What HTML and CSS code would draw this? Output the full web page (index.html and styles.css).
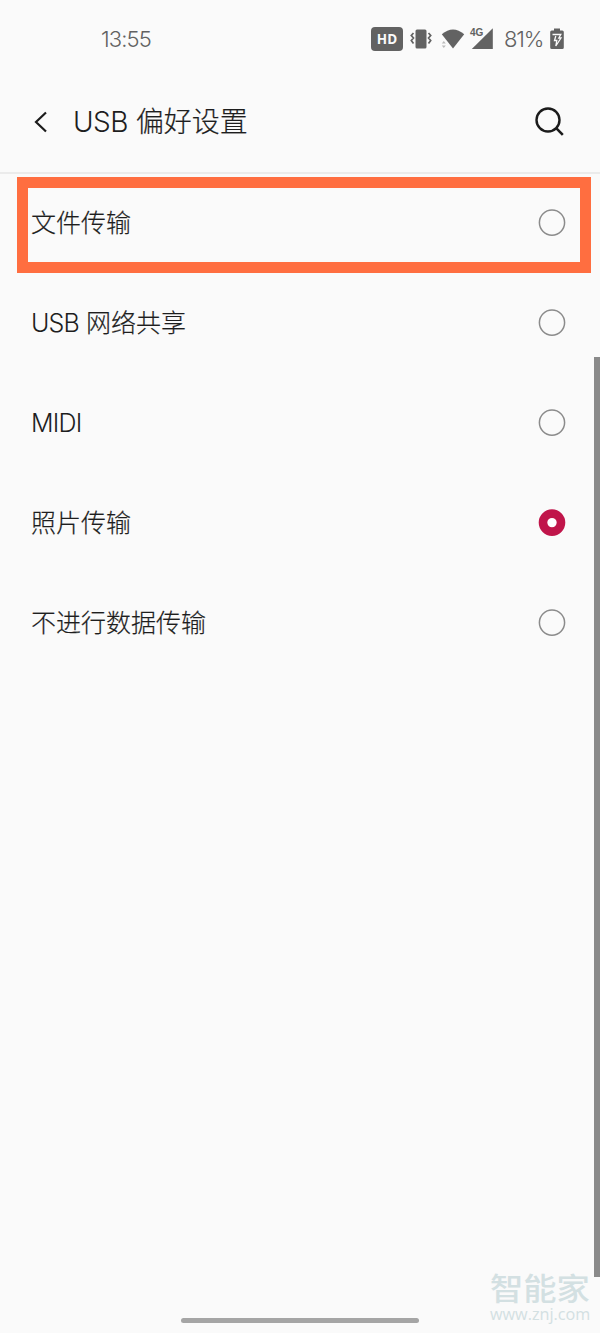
FILE: index.html
```html
<!DOCTYPE html>
<html lang="zh-CN">
<head>
<meta charset="utf-8">
<title>USB 偏好设置</title>
<link rel="stylesheet" href="styles.css">
</head>
<body>
<div class="screen">
  <div class="status">
    <span class="time">13:55</span>
    <div class="status-icons">
      <span class="hd">HD</span>
      <svg class="vibrate" width="22" height="22" viewBox="0 0 22 22"><rect x="5.5" y="1.5" width="11" height="19" rx="1.5" fill="#626262"/><path d="M3.5 5 L1.3 7.5 L3.5 10 L1.3 12.5 L3.5 15.5 M18.5 5 L20.7 7.5 L18.5 10 L20.7 12.5 L18.5 15.5" fill="none" stroke="#626262" stroke-width="1.7"/></svg>
      <svg class="wifi" width="24" height="22" viewBox="0 0 24 22"><path d="M.8 6.2 Q12-3.2 23.2 6.2 L12 20.5Z" fill="#626262"/><path d="M.8 15.5 L2.8 13 L4.8 15.5Z M.8 17.5 L2.8 20 L4.8 17.5Z" fill="#bbb"/></svg>
      <div class="signal"><span class="net">4G</span><svg width="22" height="22" viewBox="0 0 22 22"><path d="M21.8 .2 V21 H.8Z" fill="#626262"/></svg></div>
      <span class="percent">81%</span>
      <svg class="battery" width="14" height="22" viewBox="0 0 14 22"><path d="M4 .5 H10 V2.5 H12.3 Q13.8 2.5 13.8 4 V19.5 Q13.8 21 12.3 21 H1.7 Q.2 21 .2 19.5 V4 Q.2 2.5 1.7 2.5 H4Z" fill="#626262"/><path d="M2.5 6.5 H10.8 L8.8 10 H11 L5.8 18 L6.8 12.5 H4.5 L5.8 8" fill="none" stroke="#fafafa" stroke-width="1.3"/></svg>
    </div>
  </div>
  <header class="header">
    <svg class="back" width="14" height="22" viewBox="0 0 14 22"><path d="M12 1.5 L2 11 L12 20.5" fill="none" stroke="#1b1b1b" stroke-width="2.2"/></svg>
    <h1 class="title"><span class="latin">USB</span> 偏好设置</h1>
    <svg class="search" width="30" height="30" viewBox="0 0 30 30"><circle cx="13" cy="13" r="11.5" fill="none" stroke="#1b1b1b" stroke-width="2.4"/><path d="M21.2 21.2 L27.8 27.8" stroke="#1b1b1b" stroke-width="2.6"/></svg>
  </header>
  <main class="list">
    <div class="row"><span class="label">文件传输</span><svg class="radio" viewBox="0 0 28 28"><circle cx="14" cy="13.6" r="12.6"/></svg></div>
    <div class="row"><span class="label"><span class="latin">USB</span> 网络共享</span><svg class="radio" viewBox="0 0 28 28"><circle cx="14" cy="13.6" r="12.6"/></svg></div>
    <div class="row"><span class="label"><span class="latin">MIDI</span></span><svg class="radio" viewBox="0 0 28 28"><circle cx="14" cy="13.6" r="12.6"/></svg></div>
    <div class="row"><span class="label">照片传输</span><svg class="radio checked" viewBox="0 0 28 28"><circle cx="14" cy="13.6" r="9"/></svg></div>
    <div class="row"><span class="label">不进行数据传输</span><svg class="radio" viewBox="0 0 28 28"><circle cx="14" cy="13.6" r="12.6"/></svg></div>
    <div class="highlight"></div>
  </main>
  <div class="scrollbar"></div>
  <div class="watermark"><span class="brand">智能家</span><span class="site">www.znj.com</span></div>
  <div class="gesture"></div>
</div>
</body>
</html>
```
FILE: styles.css
```css
* { box-sizing: border-box; }
body { margin: 0; background: #fafafa; }
.screen {
  position: relative;
  display: flex;
  flex-direction: column;
  width: 600px;
  height: 1333px;
  overflow: hidden;
  background: #fafafa;
  color: #1e1e1e;
  font-family: Inter, "Noto Sans CJK SC", sans-serif;
  font-weight: 300;
}
.status {
  display: flex;
  align-items: center;
  justify-content: space-between;
  height: 78px;
  padding: 0 36px 0 101px;
  color: #626262;
}
.time { font-size: 22px; letter-spacing: -0.9px; }
.status-icons { display: flex; align-items: center; }
.hd {
  width: 32px;
  height: 24px;
  margin-right: 7px;
  border-radius: 4px;
  background: #626262;
  color: #fafafa;
  font: 700 13.5px/24px "Open Sans", sans-serif;
  text-align: center;
}
.wifi { margin-left: 9px; }
.signal { position: relative; height: 22px; margin-left: 6px; }
.signal svg { display: block; }
.net {
  position: absolute;
  left: -1px;
  top: -1px;
  font: 700 10px/11px "Liberation Sans", sans-serif;
}
.percent { width: 39px; margin: 0 7px 0 11px; font-size: 22px; letter-spacing: -1.2px; white-space: nowrap; }
.header {
  display: flex;
  align-items: center;
  height: 96px;
  padding: 0 35px 6px 34px;
  border-bottom: 2px solid #ebebeb;
}
.title { flex: 1; margin: 0 0 0 25px; font-size: 28px; font-weight: 300; line-height: 40px; white-space: nowrap; -webkit-text-stroke: 0.2px #1e1e1e; }
.latin { letter-spacing: -0.5px; -webkit-text-stroke: 0; }
.list { position: relative; display: flex; flex-direction: column; margin-top: -1px; }
.row {
  display: flex;
  align-items: center;
  justify-content: space-between;
  height: 100px;
  padding: 0 34px 1px 31px;
}
.label { font-size: 25px; line-height: 36px; -webkit-text-stroke: 0.2px #1e1e1e; }
.label .latin { letter-spacing: -0.8px; }
.radio { width: 28px; height: 28px; fill: none; stroke: #8b8b8b; stroke-width: 1.5px; }
.radio.checked { fill: #fff; stroke: #c0154a; stroke-width: 8.6px; }
.highlight {
  position: absolute;
  left: 17px;
  top: 4px;
  width: 574px;
  height: 96px;
  border: 11px solid #ff6e40;
}
.scrollbar { position: absolute; right: 0; top: 357px; width: 6px; height: 920px; background: #8a8a8a; }
.watermark {
  position: absolute;
  right: 10px;
  bottom: 9px;
  display: flex;
  flex-direction: column;
  width: 100px;
  color: #d3e0e2;
  white-space: nowrap;
}
.brand { font: 500 33.3px/34px "Noto Sans CJK SC", sans-serif; transform: scaleY(0.92); }
.site { font: 400 16.2px/20px "Open Sans", sans-serif; }
.gesture {
  width: 238px;
  height: 5px;
  margin: auto auto 10px;
  border-radius: 3px;
  background: #a5a5a5;
}
```
